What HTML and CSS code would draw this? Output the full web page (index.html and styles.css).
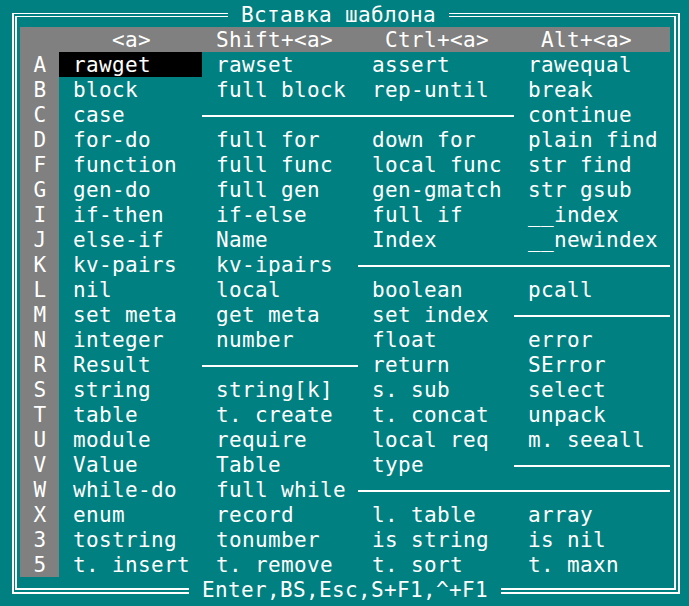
FILE: index.html
```html
<!DOCTYPE html>
<html lang="ru">
<head>
<meta charset="utf-8">
<title>Вставка шаблона</title>
<link rel="stylesheet" href="styles.css">
</head>
<body>
<div class="screen">
  <div class="frame">
    <div class="title">Вставка шаблона</div>
    <div class="table">
      <div class="row head">
        <span class="key"></span>
        <span class="h h1">&lt;a&gt;</span>
        <span class="h h2">Shift+&lt;a&gt;</span>
        <span class="h h3">Ctrl+&lt;a&gt;</span>
        <span class="h h4">Alt+&lt;a&gt;</span>
      </div>
      <div class="row"><span class="key">A</span><span class="cell sel">rawget</span><span class="cell">rawset</span><span class="cell">assert</span><span class="cell">rawequal</span></div>
      <div class="row"><span class="key">B</span><span class="cell">block</span><span class="cell">full block</span><span class="cell">rep-until</span><span class="cell">break</span></div>
      <div class="row"><span class="key">C</span><span class="cell">case</span><span class="cell line"></span><span class="cell line"></span><span class="cell">continue</span></div>
      <div class="row"><span class="key">D</span><span class="cell">for-do</span><span class="cell">full for</span><span class="cell">down for</span><span class="cell">plain find</span></div>
      <div class="row"><span class="key">F</span><span class="cell">function</span><span class="cell">full func</span><span class="cell">local func</span><span class="cell">str find</span></div>
      <div class="row"><span class="key">G</span><span class="cell">gen-do</span><span class="cell">full gen</span><span class="cell">gen-gmatch</span><span class="cell">str gsub</span></div>
      <div class="row"><span class="key">I</span><span class="cell">if-then</span><span class="cell">if-else</span><span class="cell">full if</span><span class="cell">__index</span></div>
      <div class="row"><span class="key">J</span><span class="cell">else-if</span><span class="cell">Name</span><span class="cell">Index</span><span class="cell">__newindex</span></div>
      <div class="row"><span class="key">K</span><span class="cell">kv-pairs</span><span class="cell">kv-ipairs</span><span class="cell line"></span><span class="cell line"></span></div>
      <div class="row"><span class="key">L</span><span class="cell">nil</span><span class="cell">local</span><span class="cell">boolean</span><span class="cell">pcall</span></div>
      <div class="row"><span class="key">M</span><span class="cell">set meta</span><span class="cell">get meta</span><span class="cell">set index</span><span class="cell line"></span></div>
      <div class="row"><span class="key">N</span><span class="cell">integer</span><span class="cell">number</span><span class="cell">float</span><span class="cell">error</span></div>
      <div class="row"><span class="key">R</span><span class="cell">Result</span><span class="cell line"></span><span class="cell">return</span><span class="cell">SError</span></div>
      <div class="row"><span class="key">S</span><span class="cell">string</span><span class="cell">string[k]</span><span class="cell">s. sub</span><span class="cell">select</span></div>
      <div class="row"><span class="key">T</span><span class="cell">table</span><span class="cell">t. create</span><span class="cell">t. concat</span><span class="cell">unpack</span></div>
      <div class="row"><span class="key">U</span><span class="cell">module</span><span class="cell">require</span><span class="cell">local req</span><span class="cell">m. seeall</span></div>
      <div class="row"><span class="key">V</span><span class="cell">Value</span><span class="cell">Table</span><span class="cell">type</span><span class="cell line"></span></div>
      <div class="row"><span class="key">W</span><span class="cell">while-do</span><span class="cell">full while</span><span class="cell line"></span><span class="cell line"></span></div>
      <div class="row"><span class="key">X</span><span class="cell">enum</span><span class="cell">record</span><span class="cell">l. table</span><span class="cell">array</span></div>
      <div class="row"><span class="key">3</span><span class="cell">tostring</span><span class="cell">tonumber</span><span class="cell">is string</span><span class="cell">is nil</span></div>
      <div class="row"><span class="key">5</span><span class="cell">t. insert</span><span class="cell">t. remove</span><span class="cell">t. sort</span><span class="cell">t. maxn</span></div>
    </div>
    <div class="footer">Enter,BS,Esc,S+F1,^+F1</div>
  </div>
</div>
</body>
</html>
```
FILE: styles.css
```css
html, body {
  margin: 0;
  padding: 0;
  background: #008080;
}
body {
  font-family: "DejaVu Sans Mono", monospace;
  font-size: 21px;
  letter-spacing: 0.36px;
  line-height: 25px;
  color: #ffffff;
}
.screen {
  box-sizing: border-box;
  height: 606px;
  overflow: hidden;
  padding: 13px 0 0 12px;
}
.frame {
  position: relative;
  box-sizing: border-box;
  width: 668px;
  height: 581px;
  border-style: double;
  border-color: #ffffff;
  border-width: 4px 6px 6px 5px;
  padding: 10px 4px 11px 3px;
}
.title,
.footer {
  position: absolute;
  box-sizing: border-box;
  height: 25px;
  padding: 1px 13px 0;
  background: #008080;
  white-space: pre;
}
.title {
  top: -15px;
  left: 211px;
}
.footer {
  top: 560px;
  left: 172px;
}
.table {
  width: 650px;
}
.row {
  display: grid;
  grid-template-columns: 39px 143px 156px 156px 156px;
  height: 25px;
  overflow: hidden;
}
.head {
  background: #808080;
}
.key,
.h,
.cell {
  box-sizing: border-box;
  padding-top: 1px;
  white-space: pre;
}
.key {
  background: #808080;
  text-align: center;
  padding-left: 1px;
}
.h1 { padding-left: 53px; }
.h2 { padding-left: 14px; }
.h3 { padding-left: 27px; }
.h4 { padding-left: 27px; }
.cell {
  padding-left: 14px;
}
.sel {
  background: #000000;
}
.line {
  background: linear-gradient(#ffffff, #ffffff) 0 13px / 100% 2px no-repeat;
}
```
